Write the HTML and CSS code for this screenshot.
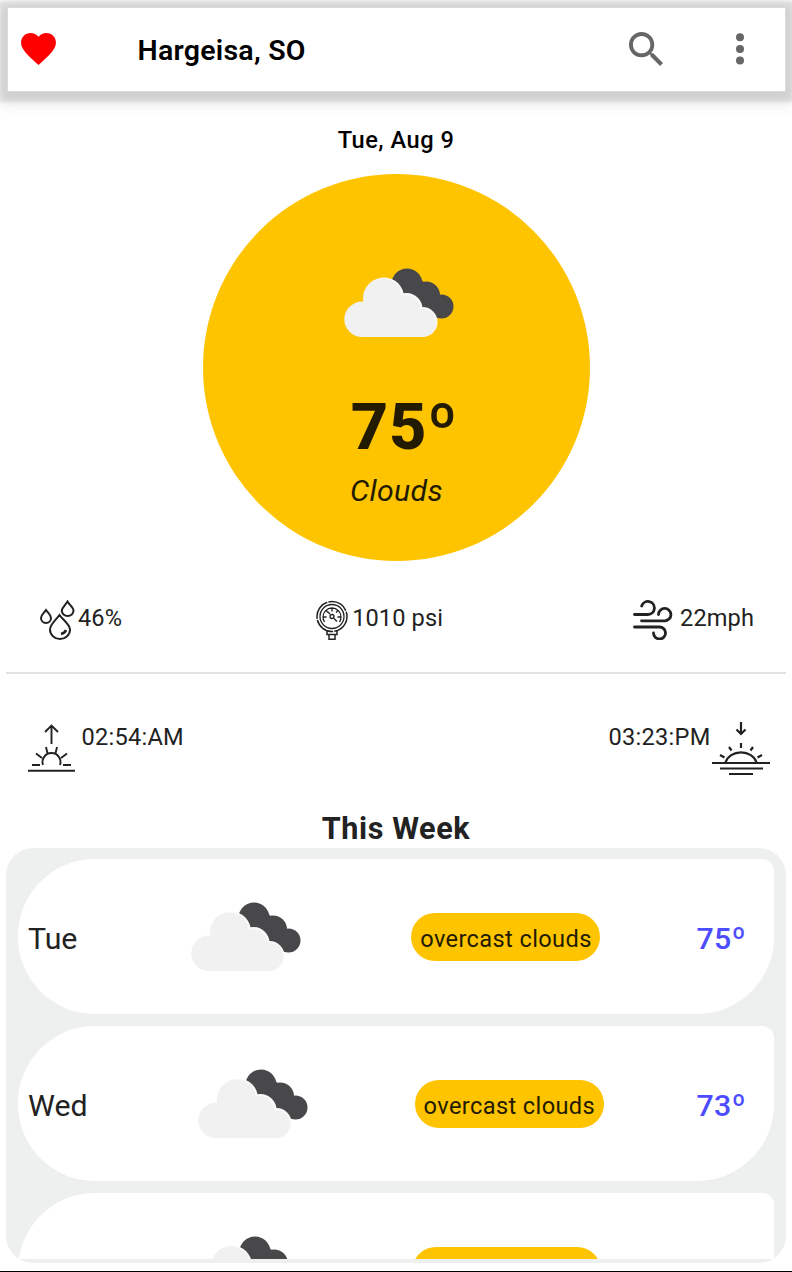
FILE: index.html
```
<!DOCTYPE html>
<html lang="en">
<head>
<meta charset="utf-8">
<title>Weather</title>
<link rel="stylesheet" href="styles.css">
</head>
<body>
<svg class="defs" aria-hidden="true">
  <symbol id="clouds" viewBox="0 0 110 70">
    <g fill="#48484a"><circle cx="63" cy="16" r="15.500"/><circle cx="82" cy="27.500" r="14"/><circle cx="97.500" cy="38.500" r="12"/><path d="M48 12L58 38 78 46 92 49 98 50 97 36 76 10z"/></g>
    <g fill="#fafafa"><circle cx="40" cy="29.500" r="20"/><circle cx="62.500" cy="41" r="16"/><circle cx="78.500" cy="54" r="15"/></g>
    <g fill="#f1f1f1"><circle cx="38.500" cy="30" r="19.500"/><circle cx="61.500" cy="42" r="15"/><circle cx="78" cy="55" r="14"/><circle cx="18" cy="51.300" r="17.700"/><path d="M18 34L60 30 78 50V69H18z"/></g>
  </symbol>
</svg>
<main class="app">
  <header class="topbar">
    <svg class="heart" viewBox="2 3 20 18.35"><path fill="#f00" d="M12 21.35l-1.45-1.32C5.4 15.36 2 12.28 2 8.5 2 5.42 4.42 3 7.5 3c1.74 0 3.41.81 4.5 2.09C13.09 3.81 14.76 3 16.5 3 19.58 3 22 5.42 22 8.5c0 3.78-3.4 6.86-8.55 11.54L12 21.35z"/></svg>
    <h1 class="city">Hargeisa, SO</h1>
    <svg class="search" viewBox="3 3 17.5 17.5"><path fill="#666" d="M15.5 14h-.79l-.28-.27C15.41 12.59 16 11.11 16 9.5 16 5.91 13.09 3 9.5 3S3 5.91 3 9.5 5.91 16 9.5 16c1.61 0 3.09-.59 4.23-1.57l.27.28v.79l5 4.99L20.49 19l-4.99-5zm-6 0C7.01 14 5 11.99 5 9.5S7.01 5 9.5 5 14 7.01 14 9.5 11.99 14 9.5 14z"/></svg>
    <svg class="more" viewBox="0 0 8 32"><g fill="#666"><circle cx="4" cy="4.2" r="4"/><circle cx="4" cy="16" r="4"/><circle cx="4" cy="27.6" r="4"/></g></svg>
  </header>

  <p class="date">Tue, Aug 9</p>
  <section class="current">
    <svg class="cloud"><use href="#clouds"/></svg>
    <p class="temp">75º</p>
    <p class="sky">Clouds</p>
  </section>

  <section class="stats">
    <div class="stat">
      <svg class="drops" viewBox="0 0 36 40" fill="none" stroke="#222" stroke-width="2"><path d="M19.500 15c-3.600 5-9.500 9.500-9.500 14.500a10 9.500 0 0 0 20 0c0-5-7-9.500-10.500-14.500zM6 10C4 13 1 15 1 18a5 5 0 0 0 10 0c0-3-3-5-5-8zM27.500 1.500c-2 3.500-5.700 6-5.700 9.300a5.700 5 0 0 0 11.700 0c0-3.300-4-5.800-6-9.300z"/><path stroke-width="2.500" d="M21 34q4-1 5-4"/></svg>
      <span>46%</span>
    </div>
    <div class="stat stat-mid">
      <svg class="gauge" viewBox="0 0 32 40" fill="none" stroke="#222"><circle cx="16" cy="16.500" r="15" stroke-width="1.500" stroke-dasharray="21 1.200"/><circle cx="16" cy="16.500" r="12" stroke-width="1.300"/><path stroke-width="1.300" d="M8.500 22a9 9 0 0 1-1.500-5a9 9 0 0 1 18 0a9 9 0 0 1-1.500 5M16 8v3.500M10 10.500l2 2M22 10.500l-2 2M7.500 17h3M21.500 17h3M14 14l-2-2M18 18.500l3 3"/><circle cx="16" cy="16.500" r="2" stroke-width="1.300"/><path stroke-width="1.500" d="M11 31v3.500h10V31M13 35v4.200h6V35"/></svg>
      <span>1010 psi</span>
    </div>
    <div class="stat">
      <svg class="wind" viewBox="0 0 40 40" fill="none" stroke="#222" stroke-width="2.800" stroke-linecap="round"><path d="M1.500 14.500H15a6.500 6.500 0 1 0-6.300-8.500M8.500 20.800H32a6.200 6.200 0 1 0-6.500-6.300M1.500 27H27a6 6 0 1 1-6.500 6"/></svg>
      <span>22mph</span>
    </div>
  </section>

  <section class="sun">
    <div class="sun-item">
      <svg class="sunrise" viewBox="0 0 47 48" fill="none" stroke="#222" stroke-width="1.900"><path d="M23.500 20V2M17 8l6.500-6.500L30 8M15 41a9 9 0 1 1 17 0M4 41h8M35 41h8M18 23l1.500 6.500M29 23l-1.500 6.500M8 29.500l6 4.500M39 29.500L33 34"/><path d="M0 46.800h47" stroke-width="2"/></svg>
      <span>02:54:AM</span>
    </div>
    <div class="sun-item sun-end">
      <span>03:23:PM</span>
      <svg class="sunset" viewBox="0 0 58 54" fill="none" stroke="#222" stroke-width="2.200"><path d="M29 0v11M24.500 7.500L29 12l4.500-4.500M13.500 40.500a16 13.500 0 0 1 31 0M29 21v5M17 25l2.500 3.500M41 25l-2.500 3.500M8 33l4.500 2.500M50 33l-4.500 2.500M0 41h58M8 46.500h43M17 52h24"/></svg>
    </div>
  </section>

  <h2 class="week-title">This Week</h2>
  <section class="week">
    <div class="scroller">
      <article class="day"><span class="name">Tue</span><div class="pic"><svg class="cloud"><use href="#clouds"/></svg></div><span class="pill">overcast clouds</span><span class="deg">75º</span></article>
      <article class="day"><span class="name">Wed</span><div class="pic"><svg class="cloud"><use href="#clouds"/></svg></div><span class="pill">overcast clouds</span><span class="deg">73º</span></article>
      <article class="day"><span class="name name-empty"></span><div class="pic"><svg class="cloud"><use href="#clouds"/></svg></div><span class="pill"></span><span class="deg"></span></article>
    </div>
  </section>
</main>
</body>
</html>
```
FILE: styles.css
```
* { box-sizing: border-box; margin: 0; padding: 0; }
body {
  width: 792px;
  height: 1272px;
  overflow: hidden;
  background: #fff;
  color: #222;
  font-family: Roboto, sans-serif;
}
svg { display: block; flex: none; }
.defs { position: absolute; width: 0; height: 0; }
.app {
  height: 1272px;
  display: flex;
  flex-direction: column;
  border-bottom: 1.500px solid #000;
}
.topbar {
  flex: none;
  height: 83px;
  margin: 8px 7.500px 0 7.500px;
  padding: 0 41px 0 13px;
  display: flex;
  align-items: center;
  box-shadow: 0 0 0 1px #dadada, 0 2px 4px 9px rgba(0,0,0,.11), 0 4px 14px 9px rgba(0,0,0,.09);
}
.heart { width: 35px; height: 32px; margin: -2px 1px 0 0; }
.city {
  flex: 1;
  margin: 2px 0 0 81px;
  font-size: 28.500px;
  line-height: 34px;
  font-weight: 600;
  letter-spacing: .25px;
  color: #000;
}
.search { width: 34px; height: 34px; margin: -2px 73px 0 0; }
.more { width: 8px; height: 32px; margin-top: -1px; }
.date {
  margin-top: 35px;
  text-align: center;
  font-size: 23.600px;
  line-height: 28px;
  font-weight: 500;
  letter-spacing: .5px;
  color: #000;
}
.current {
  flex: none;
  align-self: center;
  width: 387px;
  height: 387px;
  margin: 20.400px 0 0 1px;
  border-radius: 50%;
  background: #ffc400;
  color: #231b00;
  display: flex;
  flex-direction: column;
  align-items: center;
  padding-top: 93.500px;
}
.cloud { width: 110px; height: 70px; }
.current .cloud { margin-left: 4px; }
.temp {
  margin: 51px 0 0 16px;
  font-size: 65px;
  line-height: 76px;
  font-weight: 800;
  letter-spacing: 1px;
}
.sky {
  margin-top: 8px;
  font-size: 30.300px;
  line-height: 36px;
  font-style: italic;
  letter-spacing: .3px;
}
.stats {
  flex: none;
  height: 112.600px;
  margin: 0 6px;
  padding: 39px 32px 0 34px;
  border-bottom: 2.500px solid #e2e2e2;
  display: flex;
  justify-content: space-between;
  font-size: 23.600px;
  line-height: 28px;
  letter-spacing: .1px;
}
.stat { display: flex; align-items: flex-start; }
.stat span { margin-top: 4px; }
.stat-mid { padding-left: 4px; }
.drops { width: 36px; height: 40px; margin-right: 2px; }
.gauge { width: 32px; height: 40px; margin-right: 4px; }
.wind { width: 40px; height: 40px; margin-right: 7px; }
.sun {
  flex: none;
  height: 134px;
  padding: 48px 22px 0 28px;
  display: flex;
  justify-content: space-between;
  font-size: 23.600px;
  line-height: 28px;
  letter-spacing: .25px;
}
.sun-item { display: flex; align-items: flex-start; gap: 6.500px; }
.sun-item span { margin-top: 1px; }
.sun-end { gap: 1.500px; }
.sunrise { width: 47px; height: 48px; margin-top: 2px; }
.sunset { width: 58px; height: 54px; }
.week-title {
  padding-top: 1px;
  text-align: center;
  font-size: 30.600px;
  line-height: 39px;
  font-weight: 700;
  letter-spacing: .6px;
}
.week {
  flex: none;
  height: 415px;
  margin: 0 6px;
  padding: 11.500px 12px 4px;
  border-radius: 27px;
  background: #eef0f0;
  overflow: hidden;
}
.scroller {
  height: 100%;
  overflow: hidden;
  display: flex;
  flex-direction: column;
  gap: 12px;
}
.day {
  flex: none;
  height: 154.700px;
  padding: 0 28px 0 10px;
  border-radius: 77px 12px 77px 77px;
  background: #fff;
  display: flex;
  align-items: center;
  justify-content: space-between;
}
.day .cloud { margin-top: 1px; }
.name { font-size: 30.300px; margin-top: 4px; }
.name-empty { width: 50px; }
.pic { width: 142px; padding-left: 18px; }
.pill {
  width: 189px;
  height: 48px;
  margin-top: 1px;
  border-radius: 24px;
  background: #ffc400;
  color: #231b00;
  text-align: center;
  font-size: 23.600px;
  line-height: 52px;
  letter-spacing: .38px;
  white-space: nowrap;
}
.deg {
  min-width: 49px;
  margin-top: 4px;
  font-size: 30.300px;
  font-weight: 500;
  letter-spacing: .4px;
  color: #4d4dff;
}
```
